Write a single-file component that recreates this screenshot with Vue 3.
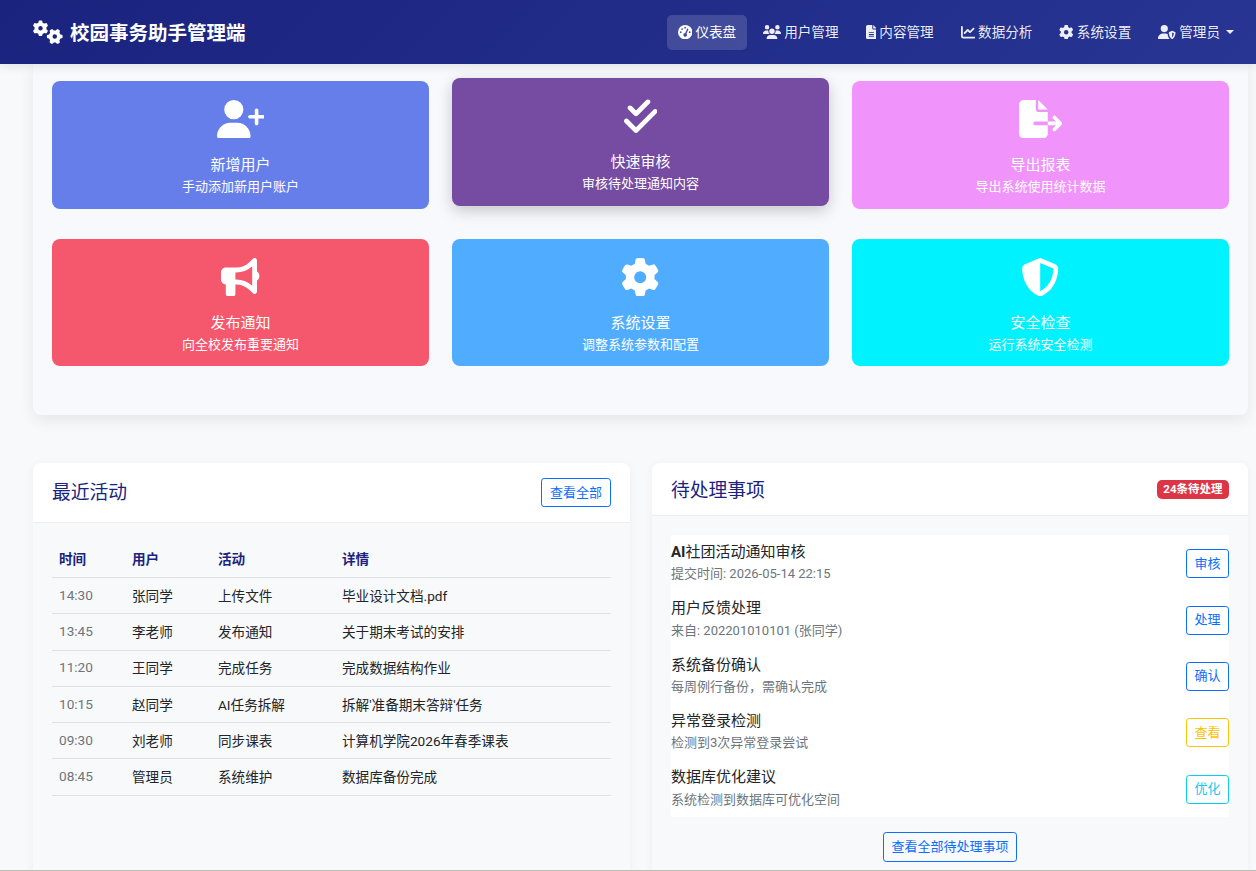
<script setup>
const icons = {
  cogs: { vb: "0 0 640 512", d: "M308.5 135.3c7.1-6.3 9.9-16.2 6.2-25c-2.3-5.3-4.8-10.5-7.6-15.5L304 89.4c-3-5-6.3-9.9-9.8-14.6c-5.7-7.6-15.7-10.1-24.7-7.1l-28.2 9.3c-10.7-8.8-23-16-36.2-20.9L199 27.1c-1.9-9.3-9.1-16.7-18.5-17.8C173.9 8.4 167.2 8 160.4 8h-.7c-6.8 0-13.5 .4-20.1 1.2c-9.4 1.1-16.6 8.6-18.5 17.8L115 56.1c-13.3 5-25.5 12.1-36.2 20.9L50.5 67.8c-9-3-19-.5-24.7 7.1c-3.5 4.7-6.8 9.6-9.9 14.6l-3 5.3c-2.8 5-5.3 10.2-7.6 15.6c-3.7 8.7-.9 18.6 6.2 25l22.2 19.8C32.6 161.9 32 168.9 32 176s.6 14.1 1.7 20.9L11.5 216.7c-7.1 6.3-9.9 16.2-6.2 25c2.3 5.3 4.8 10.5 7.6 15.6l3 5.2c3 5.1 6.3 9.9 9.9 14.6c5.7 7.6 15.7 10.1 24.7 7.1l28.2-9.3c10.7 8.8 23 16 36.2 20.9l6.1 29.1c1.9 9.3 9.1 16.7 18.5 17.8c6.7 .8 13.5 1.2 20.4 1.2s13.7-.4 20.4-1.2c9.4-1.1 16.6-8.6 18.5-17.8l6.1-29.1c13.3-5 25.5-12.1 36.2-20.9l28.2 9.3c9 3 19 .5 24.7-7.1c3.5-4.7 6.8-9.5 9.8-14.6l3.1-5.4c2.8-5 5.3-10.2 7.6-15.5c3.7-8.7 .9-18.6-6.2-25l-22.2-19.8c1.1-6.8 1.7-13.8 1.7-20.9s-.6-14.1-1.7-20.9l22.2-19.8zM112 176a48 48 0 1 1 96 0 48 48 0 1 1 -96 0zM504.7 500.5c6.3 7.1 16.2 9.9 25 6.2c5.3-2.3 10.5-4.8 15.5-7.6l5.4-3.1c5-3 9.9-6.3 14.6-9.8c7.6-5.7 10.1-15.7 7.1-24.7l-9.3-28.2c8.8-10.7 16-23 20.9-36.2l29.1-6.1c9.3-1.9 16.7-9.1 17.8-18.5c.8-6.7 1.2-13.5 1.2-20.4s-.4-13.7-1.2-20.4c-1.1-9.4-8.6-16.6-17.8-18.5L583.9 307c-5-13.3-12.1-25.5-20.9-36.2l9.3-28.2c3-9 .5-19-7.1-24.7c-4.7-3.5-9.6-6.8-14.6-9.9l-5.3-3c-5-2.8-10.2-5.3-15.6-7.6c-8.7-3.7-18.6-.9-25 6.2l-19.8 22.2c-6.8-1.1-13.8-1.7-20.9-1.7s-14.1 .6-20.9 1.7l-19.8-22.2c-6.3-7.1-16.2-9.9-25-6.2c-5.3 2.3-10.5 4.8-15.6 7.6l-5.2 3c-5.1 3-9.9 6.3-14.6 9.9c-7.6 5.7-10.1 15.7-7.1 24.7l9.3 28.2c-8.8 10.7-16 23-20.9 36.2L315.1 313c-9.3 1.9-16.7 9.1-17.8 18.5c-.8 6.7-1.2 13.5-1.2 20.4s.4 13.7 1.2 20.4c1.1 9.4 8.6 16.6 17.8 18.5l29.1 6.1c5 13.3 12.1 25.5 20.9 36.2l-9.3 28.2c-3 9-.5 19 7.1 24.7c4.7 3.5 9.5 6.8 14.6 9.8l5.4 3.1c5 2.8 10.2 5.3 15.5 7.6c8.7 3.7 18.6 .9 25-6.2l19.8-22.2c6.8 1.1 13.8 1.7 20.9 1.7s14.1-.6 20.9-1.7l19.8 22.2zM464 304a48 48 0 1 1 0 96 48 48 0 1 1 0-96z" },
  gauge: { vb: "0 0 512 512", d: "M0 256a256 256 0 1 1 512 0A256 256 0 1 1 0 256zM288 96a32 32 0 1 0 -64 0 32 32 0 1 0 64 0zM256 416c35.3 0 64-28.7 64-64c0-17.4-6.9-33.1-18.1-44.6L366 161.7c5.3-12.1-.2-26.3-12.3-31.6s-26.3 .2-31.6 12.3L257.9 288c-.6 0-1.3 0-1.9 0c-35.3 0-64 28.7-64 64s28.7 64 64 64zM176 144a32 32 0 1 0 -64 0 32 32 0 1 0 64 0zM96 288a32 32 0 1 0 0-64 32 32 0 1 0 0 64zm352-32a32 32 0 1 0 -64 0 32 32 0 1 0 64 0z" },
  users: { vb: "0 0 640 512", d: "M144 0a80 80 0 1 1 0 160A80 80 0 1 1 144 0zM512 0a80 80 0 1 1 0 160A80 80 0 1 1 512 0zM0 298.7C0 239.8 47.8 192 106.7 192h42.7c15.9 0 31 3.5 44.6 9.7c-1.3 7.2-1.9 14.7-1.9 22.3c0 38.2 16.8 72.5 43.3 96c-.2 0-.4 0-.7 0H21.3C9.6 320 0 310.4 0 298.7zM405.3 320c-.2 0-.4 0-.7 0c26.6-23.5 43.3-57.8 43.3-96c0-7.6-.7-15-1.9-22.3c13.6-6.3 28.7-9.7 44.6-9.7h42.7C592.2 192 640 239.8 640 298.7c0 11.8-9.6 21.3-21.3 21.3H405.3zM224 224a96 96 0 1 1 192 0 96 96 0 1 1 -192 0zM128 485.3C128 411.7 187.7 352 261.3 352H378.7C452.3 352 512 411.7 512 485.3c0 14.7-11.9 26.7-26.7 26.7H154.7c-14.7 0-26.7-11.9-26.7-26.7z" },
  file: { vb: "0 0 384 512", d: "M64 0C28.7 0 0 28.7 0 64V448c0 35.3 28.7 64 64 64H320c35.3 0 64-28.7 64-64V160H256c-17.7 0-32-14.3-32-32V0H64zM256 0V128H384L256 0zM112 256H272c8.8 0 16 7.2 16 16s-7.2 16-16 16H112c-8.8 0-16-7.2-16-16s7.2-16 16-16zm0 64H272c8.8 0 16 7.2 16 16s-7.2 16-16 16H112c-8.8 0-16-7.2-16-16s7.2-16 16-16zm0 64H272c8.8 0 16 7.2 16 16s-7.2 16-16 16H112c-8.8 0-16-7.2-16-16s7.2-16 16-16z" },
  chart: { vb: "0 0 512 512", d: "M64 64c0-17.7-14.3-32-32-32S0 46.3 0 64V400c0 44.2 35.8 80 80 80H480c17.7 0 32-14.3 32-32s-14.3-32-32-32H80c-8.8 0-16-7.2-16-16V64zm406.6 86.6c12.5-12.5 12.5-32.8 0-45.3s-32.8-12.5-45.3 0L320 210.7l-57.4-57.4c-12.5-12.5-32.8-12.5-45.3 0l-112 112c-12.5 12.5-12.5 32.8 0 45.3s32.8 12.5 45.3 0L240 221.3l57.4 57.4c12.5 12.5 32.8 12.5 45.3 0l128-128z" },
  gear: { vb: "0 0 512 512", d: "M495.9 166.6c3.2 8.7 .5 18.4-6.4 24.6l-43.3 39.4c1.1 8.3 1.7 16.8 1.7 25.4s-.6 17.1-1.7 25.4l43.3 39.4c6.9 6.2 9.6 15.9 6.4 24.6c-4.4 11.9-9.7 23.3-15.8 34.3l-4.7 8.1c-6.6 11-14 21.4-22.1 31.2c-5.9 7.2-15.7 9.6-24.5 6.8l-55.7-17.7c-13.4 10.3-28.2 18.9-44 25.4l-12.5 57.1c-2 9.1-9 16.3-18.2 17.8c-13.8 2.3-28 3.5-42.5 3.5s-28.7-1.2-42.5-3.5c-9.2-1.5-16.2-8.7-18.2-17.8l-12.5-57.1c-15.8-6.5-30.6-15.1-44-25.4L83.1 425.9c-8.8 2.8-18.6 .3-24.5-6.8c-8.1-9.8-15.5-20.2-22.1-31.2l-4.7-8.1c-6.1-11-11.4-22.4-15.8-34.3c-3.2-8.7-.5-18.4 6.4-24.6l43.3-39.4C64.6 273.1 64 264.6 64 256s.6-17.1 1.7-25.4L22.4 191.2c-6.9-6.2-9.6-15.9-6.4-24.6c4.4-11.9 9.7-23.3 15.8-34.3l4.7-8.1c6.6-11 14-21.4 22.1-31.2c5.9-7.2 15.7-9.6 24.5-6.8l55.7 17.7c13.4-10.3 28.2-18.9 44-25.4l12.5-57.1c2-9.1 9-16.3 18.2-17.8C227.3 1.2 241.5 0 256 0s28.7 1.2 42.5 3.5c9.2 1.5 16.2 8.7 18.2 17.8l12.5 57.1c15.8 6.5 30.6 15.1 44 25.4l55.7-17.7c8.8-2.8 18.6-.3 24.5 6.8c8.1 9.8 15.5 20.2 22.1 31.2l4.7 8.1c6.1 11 11.4 22.4 15.8 34.3zM256 336a80 80 0 1 0 0-160 80 80 0 1 0 0 160z" },
  userShield: { vb: "0 0 640 512", d: "M224 256A128 128 0 1 0 224 0a128 128 0 1 0 0 256zm-45.7 48C79.8 304 0 383.8 0 482.3C0 498.7 13.3 512 29.7 512H430C380 470 345 400 345 322C320 310 295 304 269.7 304H178.3zM504 208L384 259c0 90 30 200 120 250c90-50 120-160 120-250L504 208zm0 58l60 26c-3 58-22 116-60 150V266z" },
  userPlus: { vb: "0 0 640 512", d: "M96 128a128 128 0 1 1 256 0A128 128 0 1 1 96 128zM0 482.3C0 383.8 79.8 304 178.3 304h91.4C368.2 304 448 383.8 448 482.3c0 16.4-13.3 29.7-29.7 29.7H29.7C13.3 512 0 498.7 0 482.3zM504 312V248H440c-13.3 0-24-10.7-24-24s10.7-24 24-24h64V136c0-13.3 10.7-24 24-24s24 10.7 24 24v64h64c13.3 0 24 10.7 24 24s-10.7 24-24 24H552v64c0 13.3-10.7 24-24 24s-24-10.7-24-24z" },
  checkDouble: { vb: "0 0 448 512", d: "M342.6 86.6c12.5-12.5 12.5-32.8 0-45.3s-32.8-12.5-45.3 0L160 178.7l-57.4-57.4c-12.5-12.5-32.8-12.5-45.3 0s-12.5 32.8 0 45.3l80 80c12.5 12.5 32.8 12.5 45.3 0l160-160zm96 128c12.5-12.5 12.5-32.8 0-45.3s-32.8-12.5-45.3 0L160 402.7 54.6 297.4c-12.5-12.5-32.8-12.5-45.3 0s-12.5 32.8 0 45.3l128 128c12.5 12.5 32.8 12.5 45.3 0l256-256z" },
  fileExport: { vb: "0 0 576 512", d: "M0 64C0 28.7 28.7 0 64 0H224V128c0 17.7 14.3 32 32 32H384V288H216c-13.3 0-24 10.7-24 24s10.7 24 24 24H384V448c0 35.3-28.7 64-64 64H64c-35.3 0-64-28.7-64-64V64zM384 336V288H494.1l-39-39c-9.4-9.4-9.4-24.6 0-33.9s24.6-9.4 33.9 0l80 80c9.4 9.4 9.4 24.6 0 33.9l-80 80c-9.4 9.4-24.6 9.4-33.9 0s-9.4-24.6 0-33.9l39-39H384zm0-208H256V0L384 128z" },
  bullhorn: { vb: "0 0 512 512", d: "M480 32c0-12.9-7.8-24.6-19.8-29.6s-25.7-2.2-34.9 6.9L381.7 53c-48 48-113.1 75-181 75H192 160 64c-35.3 0-64 28.7-64 64v96c0 35.3 28.7 64 64 64l0 128c0 17.7 14.3 32 32 32h64c17.7 0 32-14.3 32-32V352l8.7 0c67.9 0 133 27 181 75l43.6 43.6c9.2 9.2 22.9 11.9 34.9 6.9s19.8-16.6 19.8-29.6V300.4c18.6-8.8 32-32.5 32-60.4s-13.4-51.6-32-60.4V32zm-64 76.7V240 371.3C357.2 317.8 280.5 288 200.7 288H192V192h8.7c79.8 0 156.5-29.8 215.3-83.3z" },
  shield: { vb: "0 0 512 512", d: "M256 0c4.6 0 9.2 1 13.4 2.9L457.7 82.8c22 9.3 38.4 31 38.3 57.2c-.5 99.2-41.3 280.7-213.6 363.2c-16.7 8-36.1 8-52.8 0C57.3 420.7 16.5 239.2 16 140c-.1-26.2 16.3-47.9 38.3-57.2L242.7 2.9C246.8 1 251.4 0 256 0zm0 66.8V444.8C394 378 431.1 230.1 432 141.4L256 66.8l0 0z" },
};

const navItems = [
  { icon: "gauge", label: "仪表盘", active: true },
  { icon: "users", label: "用户管理" },
  { icon: "file", label: "内容管理" },
  { icon: "chart", label: "数据分析" },
  { icon: "gear", label: "系统设置" },
  { icon: "userShield", label: "管理员", caret: true },
];

const actions = [
  { icon: "userPlus", title: "新增用户", desc: "手动添加新用户账户", color: "#667eea" },
  { icon: "checkDouble", title: "快速审核", desc: "审核待处理通知内容", color: "#764ba2", lifted: true },
  { icon: "fileExport", title: "导出报表", desc: "导出系统使用统计数据", color: "#f093fb" },
  { icon: "bullhorn", title: "发布通知", desc: "向全校发布重要通知", color: "#f5576c" },
  { icon: "gear", title: "系统设置", desc: "调整系统参数和配置", color: "#4facfe" },
  { icon: "shield", title: "安全检查", desc: "运行系统安全检测", color: "#00f2fe" },
];

const activities = [
  ["14:30", "张同学", "上传文件", "毕业设计文档.pdf"],
  ["13:45", "李老师", "发布通知", "关于期末考试的安排"],
  ["11:20", "王同学", "完成任务", "完成数据结构作业"],
  ["10:15", "赵同学", "AI任务拆解", "拆解'准备期末答辩'任务"],
  ["09:30", "刘老师", "同步课表", "计算机学院2026年春季课表"],
  ["08:45", "管理员", "系统维护", "数据库备份完成"],
];

const todos = [
  { title: "社团活动通知审核", prefix: "AI", sub: "提交时间: 2026-05-14 22:15", btn: "审核", tone: "blue" },
  { title: "用户反馈处理", sub: "来自: 202201010101 (张同学)", btn: "处理", tone: "blue" },
  { title: "系统备份确认", sub: "每周例行备份，需确认完成", btn: "确认", tone: "blue" },
  { title: "异常登录检测", sub: "检测到3次异常登录尝试", btn: "查看", tone: "yellow" },
  { title: "数据库优化建议", sub: "系统检测到数据库可优化空间", btn: "优化", tone: "cyan" },
];
</script>

<template>
  <div class="page">
    <header class="navbar">
      <div class="brand">
        <svg class="brand-icon" :viewBox="icons.cogs.vb"><path :d="icons.cogs.d" /></svg>
        <span class="lift">校园事务助手管理端</span>
      </div>
      <nav class="nav">
        <a v-for="item in navItems" :key="item.label" class="nav-link" :class="{ active: item.active }">
          <svg class="nav-icon" :viewBox="icons[item.icon].vb"><path :d="icons[item.icon].d" /></svg>
          <span class="lift">{{ item.label }}</span>
          <i v-if="item.caret" class="caret"></i>
        </a>
      </nav>
    </header>

    <main class="content">
      <section class="panel">
        <div class="action-grid">
          <div
            v-for="a in actions"
            :key="a.title"
            class="action"
            :class="{ lifted: a.lifted }"
            :style="{ background: a.color }"
          >
            <svg class="action-icon" :viewBox="icons[a.icon].vb"><path :d="icons[a.icon].d" /></svg>
            <div class="action-title">{{ a.title }}</div>
            <div class="action-desc">{{ a.desc }}</div>
          </div>
        </div>
      </section>

      <div class="columns">
        <section class="card">
          <div class="card-head head-tall">
            <h5>最近活动</h5>
            <button class="btn blue">查看全部</button>
          </div>
          <div class="card-body table-body">
            <table class="table">
              <colgroup>
                <col style="width: 73px" />
                <col style="width: 86px" />
                <col style="width: 124px" />
                <col />
              </colgroup>
              <thead>
                <tr><th>时间</th><th>用户</th><th>活动</th><th>详情</th></tr>
              </thead>
              <tbody>
                <tr v-for="row in activities" :key="row[0]">
                  <td class="muted">{{ row[0] }}</td>
                  <td>{{ row[1] }}</td>
                  <td>{{ row[2] }}</td>
                  <td>{{ row[3] }}</td>
                </tr>
              </tbody>
            </table>
          </div>
        </section>

        <section class="card">
          <div class="card-head">
            <h5>待处理事项</h5>
            <span class="badge">24条待处理</span>
          </div>
          <div class="card-body">
            <ul class="todo-list">
              <li v-for="t in todos" :key="t.title" class="todo">
                <div>
                  <div class="todo-title"><strong v-if="t.prefix">{{ t.prefix }}</strong>{{ t.title }}</div>
                  <div class="todo-sub">{{ t.sub }}</div>
                </div>
                <button class="btn narrow" :class="t.tone">{{ t.btn }}</button>
              </li>
            </ul>
            <div class="all-wrap">
              <button class="btn blue tall narrow">查看全部待处理事项</button>
            </div>
          </div>
        </section>
      </div>
    </main>
  </div>
</template>

<style>
html,
body {
  margin: 0;
  background: #f8f9fa;
}
</style>

<style scoped>
.page {
  height: 871px;
  overflow: hidden;
  background: #f8f9fa;
  font-family: Roboto, "Noto Sans CJK SC", sans-serif;
  color: #212529;
  border-bottom: 1px solid #b9bcb6;
  box-sizing: border-box;
}

.navbar {
  position: relative;
  z-index: 2;
  height: 64px;
  box-sizing: border-box;
  display: flex;
  align-items: center;
  justify-content: space-between;
  padding: 0 11px 0 33px;
  background: linear-gradient(135deg, #1a237e, #283593);
  box-shadow: 0 2px 10px rgba(0, 0, 0, 0.1);
}

.lift {
  margin-bottom: 2px;
}

.brand {
  display: flex;
  align-items: center;
  gap: 7px;
  color: #fff;
  font-size: 19.5px;
  font-weight: 700;
}

.brand-icon {
  width: 30px;
  height: 24px;
  fill: #fff;
}

.nav {
  display: flex;
  align-items: center;
  gap: 5px;
}

.nav-link {
  display: flex;
  align-items: center;
  gap: 3px;
  height: 35px;
  padding: 0 11px;
  border-radius: 5px;
  color: rgba(255, 255, 255, 0.92);
  font-size: 13.6px;
}

.nav-link.active {
  background: rgba(255, 255, 255, 0.15);
  color: #fff;
}

.nav-icon {
  height: 14.4px;
  width: auto;
  fill: currentColor;
}

.caret {
  width: 0;
  height: 0;
  margin-left: 3px;
  border-top: 4px solid currentColor;
  border-left: 4px solid transparent;
  border-right: 4px solid transparent;
}

.content {
  padding: 0 8px 0 33px;
}

.panel {
  padding: 17px 19px 49px;
  background: #f8f9fc;
  border-radius: 0 0 8px 8px;
  box-shadow: 0 5px 15px rgba(0, 0, 0, 0.08);
}

.action-grid {
  display: grid;
  grid-template-columns: repeat(3, 377px);
  column-gap: 23px;
  row-gap: 30px;
}

.action {
  height: 127.6px;
  box-sizing: border-box;
  padding-top: 19px;
  border-radius: 8px;
  color: #fff;
  display: flex;
  flex-direction: column;
  align-items: center;
}

.action.lifted {
  transform: translateY(-3px);
  box-shadow: 0 5px 15px rgba(0, 0, 0, 0.2);
}

.action-icon {
  height: 38.4px;
  width: auto;
  fill: #fff;
}

.action-title {
  margin-top: 15.6px;
  font-size: 15px;
  line-height: 22.5px;
}

.action-desc {
  margin-top: 1px;
  font-size: 13px;
  line-height: 19.5px;
}

.columns {
  display: grid;
  grid-template-columns: 597px 596px;
  column-gap: 22px;
  margin-top: 48px;
}

.card {
  min-height: 440px;
  background: #f8f9fa;
  border-radius: 8px;
  box-shadow: 0 2px 10px rgba(0, 0, 0, 0.05);
  overflow: hidden;
}

.card-head {
  height: 53px;
  box-sizing: border-box;
  padding: 0 19px;
  display: flex;
  align-items: center;
  justify-content: space-between;
  background: #fff;
  border-bottom: 1px solid #eceef0;
}

.head-tall {
  height: 60px;
}

.card-head h5 {
  margin: 0 0 2px;
  font-size: 18.8px;
  font-weight: 400;
  color: #1a237e;
}

.head-tall h5 {
  margin-bottom: 4px;
}

.badge {
  height: 19px;
  line-height: 18px;
  padding: 0 6.5px;
  border-radius: 5px;
  background: #dc3545;
  color: #fff;
  font-size: 11.5px;
  font-weight: 700;
}

.card-body {
  padding: 19px;
}

.table-body {
  padding-top: 18px;
}

.btn {
  height: 29px;
  padding: 0 8px 1px;
  box-sizing: border-box;
  border: 1px solid;
  border-radius: 3.2px;
  background: transparent;
  font-family: inherit;
  font-size: 13px;
  line-height: 1;
}

.btn.narrow {
  padding-left: 7.5px;
  padding-right: 7.5px;
}

.btn.blue {
  color: #0d6efd;
  border-color: #0d6efd;
}

.btn.yellow {
  color: #ffc107;
  border-color: #ffc107;
}

.btn.cyan {
  color: #0dcaf0;
  border-color: #0dcaf0;
}

.btn.tall {
  height: 30px;
}

.table {
  width: 100%;
  border-collapse: collapse;
  table-layout: fixed;
  font-size: 13.6px;
}

.table tr {
  height: 36.3px;
}

.table th,
.table td {
  padding: 0 7px 2px;
  text-align: left;
  border-bottom: 1px solid #dee2e6;
}

.table th {
  color: #1a237e;
  font-weight: 700;
}

.muted {
  color: #6c757d;
}

.todo-list {
  margin: 0;
  padding: 0;
  list-style: none;
  background: #fff;
}

.todo {
  height: 56.4px;
  box-sizing: border-box;
  padding-top: 6.6px;
  display: flex;
  align-items: flex-start;
  justify-content: space-between;
}

.todo .btn {
  margin-top: 7.4px;
}

.todo-title {
  font-size: 15px;
  line-height: 21px;
}

.todo-title strong {
  font-weight: 700;
}

.todo-sub {
  margin-top: 1.4px;
  font-size: 13px;
  line-height: 19.5px;
  color: #6c757d;
}

.all-wrap {
  margin-top: 15px;
  text-align: center;
}
</style>
